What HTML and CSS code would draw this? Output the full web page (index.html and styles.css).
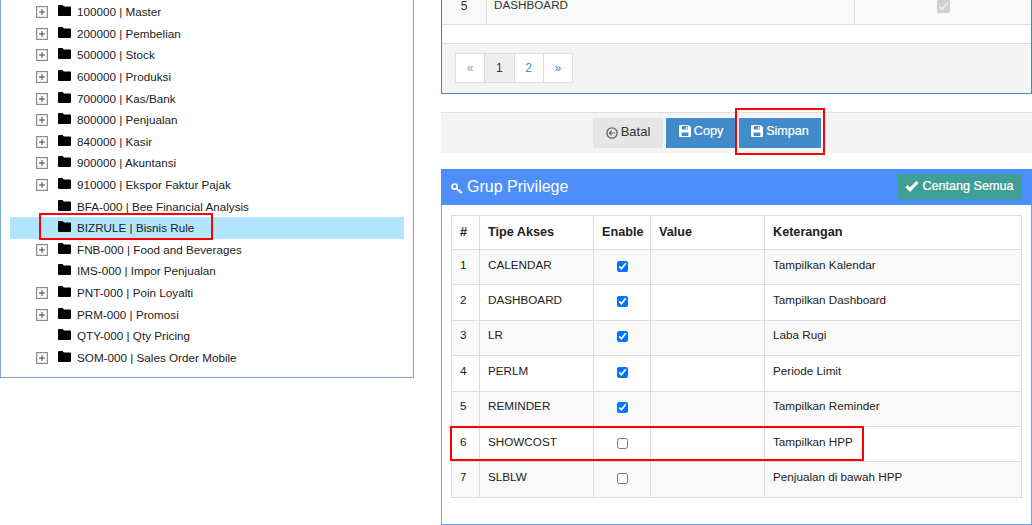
FILE: index.html
```html
<!DOCTYPE html>
<html lang="id">
<head>
<meta charset="utf-8">
<title>Grup Privilege</title>
<link rel="stylesheet" href="styles.css">
</head>
<body>
<svg class="defs" width="0" height="0" aria-hidden="true">
  <symbol id="plus" viewBox="0 0 12 12"><rect x=".5" y=".5" width="11" height="11" fill="#fff" stroke="#8c8c8c"/><rect x="1.500" y="1.500" width="9" height="9" fill="none" stroke="#e4e4e4"/><path d="M3 6h6M6 3v6" stroke="#444" stroke-width="1"/></symbol>
  <symbol id="folder" viewBox="0 0 13 11"><path d="M1 0h3.6l1.2 1.6H12a1 1 0 0 1 1 1V10a1 1 0 0 1-1 1H1a1 1 0 0 1-1-1V1a1 1 0 0 1 1-1z" fill="#000"/></symbol>
  <symbol id="save" viewBox="0 0 13 13"><path fill-rule="evenodd" d="M1 0h9.5L13 2.500V12a1 1 0 0 1-1 1H1a1 1 0 0 1-1-1V1a1 1 0 0 1 1-1zM3 1.200v3.600h6.600V1.200zM2.800 8v3.800h7.400V8zM7.400 1.800h1.400v2.400H7.400z" fill="currentColor"/></symbol>
</svg>
<div class="page">
  <aside class="tree-panel">
    <ul class="tree">
      <li><svg class="exp"><use href="#plus"/></svg><svg class="fld"><use href="#folder"/></svg><span>100000 | Master</span></li>
      <li><svg class="exp"><use href="#plus"/></svg><svg class="fld"><use href="#folder"/></svg><span>200000 | Pembelian</span></li>
      <li><svg class="exp"><use href="#plus"/></svg><svg class="fld"><use href="#folder"/></svg><span>500000 | Stock</span></li>
      <li><svg class="exp"><use href="#plus"/></svg><svg class="fld"><use href="#folder"/></svg><span>600000 | Produksi</span></li>
      <li><svg class="exp"><use href="#plus"/></svg><svg class="fld"><use href="#folder"/></svg><span>700000 | Kas/Bank</span></li>
      <li><svg class="exp"><use href="#plus"/></svg><svg class="fld"><use href="#folder"/></svg><span>800000 | Penjualan</span></li>
      <li><svg class="exp"><use href="#plus"/></svg><svg class="fld"><use href="#folder"/></svg><span>840000 | Kasir</span></li>
      <li><svg class="exp"><use href="#plus"/></svg><svg class="fld"><use href="#folder"/></svg><span>900000 | Akuntansi</span></li>
      <li><svg class="exp"><use href="#plus"/></svg><svg class="fld"><use href="#folder"/></svg><span>910000 | Ekspor Faktur Pajak</span></li>
      <li class="leaf"><svg class="fld"><use href="#folder"/></svg><span>BFA-000 | Bee Financial Analysis</span></li>
      <li class="leaf selected"><svg class="fld"><use href="#folder"/></svg><span>BIZRULE | Bisnis Rule</span></li>
      <li><svg class="exp"><use href="#plus"/></svg><svg class="fld"><use href="#folder"/></svg><span>FNB-000 | Food and Beverages</span></li>
      <li class="leaf"><svg class="fld"><use href="#folder"/></svg><span>IMS-000 | Impor Penjualan</span></li>
      <li><svg class="exp"><use href="#plus"/></svg><svg class="fld"><use href="#folder"/></svg><span>PNT-000 | Poin Loyalti</span></li>
      <li><svg class="exp"><use href="#plus"/></svg><svg class="fld"><use href="#folder"/></svg><span>PRM-000 | Promosi</span></li>
      <li class="leaf"><svg class="fld"><use href="#folder"/></svg><span>QTY-000 | Qty Pricing</span></li>
      <li><svg class="exp"><use href="#plus"/></svg><svg class="fld"><use href="#folder"/></svg><span>SOM-000 | Sales Order Mobile</span></li>
    </ul>
  </aside>

  <main class="main">
    <section class="top-panel">
      <div class="top-row">
        <div class="top-no">5</div>
        <div class="top-name">DASHBOARD</div>
        <div class="top-check"><input type="checkbox" checked disabled></div>
      </div>
      <div class="top-gap"></div>
      <div class="top-foot">
        <nav class="pager">
          <a class="muted">«</a><a class="current">1</a><a>2</a><a>»</a>
        </nav>
      </div>
    </section>

    <div class="actions">
      <button class="btn btn-grey">
        <svg class="ic ic-back" viewBox="0 0 13 13"><circle cx="6.500" cy="6.500" r="5.600" fill="none" stroke="currentColor" stroke-width="1.500"/><path d="M10 6.500H4M6.200 4 3.600 6.500 6.200 9" fill="none" stroke="currentColor" stroke-width="1.300"/></svg><span>Batal</span>
      </button>
      <button class="btn btn-blue"><svg class="ic"><use href="#save"/></svg><span>Copy</span></button>
      <button class="btn btn-blue btn-wide"><svg class="ic"><use href="#save"/></svg><span>Simpan</span></button>
    </div>

    <section class="priv-panel">
      <header class="priv-head">
        <h2><svg class="key" viewBox="0 0 12 12"><circle cx="3.600" cy="3.600" r="2.600" fill="none" stroke="currentColor" stroke-width="1.700"/><path d="M5.500 5.500 10 10M8 8 9.300 6.700M9.800 9.800 11 8.600" fill="none" stroke="currentColor" stroke-width="1.700"/></svg>Grup Privilege</h2>
        <button class="btn-check"><svg class="ok" viewBox="0 0 14 12"><path d="M1.500 6.200 5 9.700 12.500 2" fill="none" stroke="currentColor" stroke-width="3.200"/></svg><span>Centang Semua</span></button>
      </header>
      <div class="priv-body">
        <table class="priv-table">
          <colgroup><col class="c1"><col class="c2"><col class="c3"><col class="c4"><col class="c5"></colgroup>
          <thead>
            <tr><th>#</th><th>Tipe Akses</th><th>Enable</th><th>Value</th><th>Keterangan</th></tr>
          </thead>
          <tbody>
            <tr><td>1</td><td>CALENDAR</td><td class="chk"><input type="checkbox" checked></td><td></td><td>Tampilkan Kalendar</td></tr>
            <tr><td>2</td><td>DASHBOARD</td><td class="chk"><input type="checkbox" checked></td><td></td><td>Tampilkan Dashboard</td></tr>
            <tr><td>3</td><td>LR</td><td class="chk"><input type="checkbox" checked></td><td></td><td>Laba Rugi</td></tr>
            <tr><td>4</td><td>PERLM</td><td class="chk"><input type="checkbox" checked></td><td></td><td>Periode Limit</td></tr>
            <tr><td>5</td><td>REMINDER</td><td class="chk"><input type="checkbox" checked></td><td></td><td>Tampilkan Reminder</td></tr>
            <tr><td>6</td><td>SHOWCOST</td><td class="chk"><input type="checkbox"></td><td></td><td>Tampilkan HPP</td></tr>
            <tr><td>7</td><td>SLBLW</td><td class="chk"><input type="checkbox"></td><td></td><td>Penjualan di bawah HPP</td></tr>
          </tbody>
        </table>
      </div>
    </section>
  </main>

  <div class="mark mark-tree"></div>
  <div class="mark mark-save"></div>
  <div class="mark mark-row"></div>
</div>
</body>
</html>
```

FILE: styles.css
```css
html, body {
  margin: 0;
  padding: 0;
  background: #fff;
}

body {
  font-family: "Liberation Sans", Arial, sans-serif;
  font-size: 11.7px;
  color: #333;
}

.defs {
  position: absolute;
}

.page {
  position: relative;
  display: flex;
  gap: 27px;
  align-items: flex-start;
  width: 1032px;
  height: 525px;
  overflow: hidden;
}

/* tree */
.tree-panel {
  flex: 0 0 414px;
  box-sizing: border-box;
  height: 378px;
  padding-top: 1px;
  border: 1px solid #7ea6e0;
  border-top: 0;
}

.tree {
  list-style: none;
  margin: 0 9px;
  padding: 0;
}

.tree li {
  display: flex;
  align-items: center;
  height: 21.6px;
  padding-left: 26px;
  color: #222;
}

.tree li.leaf {
  padding-left: 48px;
}

.tree li.selected {
  background: #b3e5ff;
}

.exp {
  flex: none;
  width: 12px;
  height: 12px;
  margin-right: 10px;
  margin-top: 1px;
}

.fld {
  flex: none;
  width: 13px;
  height: 11px;
  margin-right: 6px;
  margin-top: -2px;
}

/* right column */
.main {
  flex: 1;
  min-width: 0;
  display: flex;
  flex-direction: column;
}

.top-panel {
  box-sizing: border-box;
  height: 94px;
  border: 1px solid #3c8dbc;
  border-top: 0;
  background: #fff;
}

.top-row {
  display: flex;
  box-sizing: border-box;
  height: 25px;
  background: #f9f9f9;
  border-bottom: 1px solid #ddd;
}

.top-no {
  width: 45px;
  box-sizing: border-box;
  border-right: 1px solid #ddd;
  text-align: center;
  line-height: 13px;
  font-size: 12px;
}

.top-name {
  width: 368px;
  box-sizing: border-box;
  padding-left: 7px;
  border-right: 1px solid #ddd;
  line-height: 10px;
}

.top-check {
  flex: 1;
  text-align: center;
}

.top-check input {
  width: 13px;
  height: 13px;
  margin: 0;
}

.top-gap {
  height: 18px;
}

.top-foot {
  box-sizing: border-box;
  height: 50px;
  padding: 9px 13px;
  background: #f4f4f4;
  border-top: 1px solid #ddd;
}

.pager {
  display: flex;
  width: 118px;
  height: 30px;
}

.pager a {
  flex: 1;
  display: flex;
  align-items: center;
  justify-content: center;
  margin-left: -1px;
  background: #fff;
  border: 1px solid #ddd;
  color: #428bca;
  font-size: 12px;
}

.pager a:first-child {
  margin-left: 0;
}

.pager a.muted {
  color: #999;
}

.pager a.current {
  background: #eee;
  color: #333;
}

/* actions */
.actions {
  box-sizing: border-box;
  display: flex;
  gap: 3px;
  height: 41px;
  margin-top: 18px;
  padding: 5px 0 0 152px;
  background: #f4f4f4;
  border-top: 1px solid #e0e0e0;
}

.btn {
  display: flex;
  align-items: center;
  justify-content: center;
  width: 70px;
  height: 30px;
  padding: 0 0 4px;
  border: 0;
  font-family: inherit;
  font-size: 12.6px;
}

.btn-grey {
  background: #e6e6e6;
  color: #333;
  font-size: 13px;
}

.btn-grey .ic-back {
  color: #666;
  margin-top: 4px;
}

.btn-blue {
  background: #428bca;
  color: #fff;
  -webkit-text-stroke: 0.2px #fff;
}

.btn-wide {
  width: 82px;
}

.ic {
  width: 12px;
  height: 12px;
  margin-right: 3px;
}

/* privilege panel */
.priv-panel {
  box-sizing: border-box;
  height: 356px;
  margin-top: 16px;
  border: 1px solid #6ea3f5;
  border-top: 0;
}

.priv-head {
  display: flex;
  align-items: flex-start;
  justify-content: space-between;
  box-sizing: border-box;
  height: 36px;
  margin: 0 -1px;
  padding: 5px 10px 0 10px;
  background: #4d8ffa;
  color: #fff;
}

.priv-head h2 {
  display: flex;
  align-items: center;
  height: 26px;
  margin: 0;
  font-size: 16px;
  font-weight: 400;
}

.key {
  width: 12px;
  height: 12px;
  margin: 3px 4px 0 0;
}

.btn-check {
  display: flex;
  align-items: center;
  justify-content: center;
  width: 125px;
  height: 26px;
  padding: 0 0 3px;
  border: 0;
  background: #3f9f97;
  color: #fff;
  font-family: inherit;
  font-size: 12.6px;
  -webkit-text-stroke: 0.2px #fff;
}

.ok {
  width: 14px;
  height: 12px;
  margin: 0 3px 0 0;
}

.priv-body {
  padding: 10px 9px 0;
}

.priv-table {
  width: 571px;
  height: 282px;
  border-collapse: collapse;
  table-layout: fixed;
}

.c1 { width: 28px; }
.c2 { width: 114px; }
.c3 { width: 57px; }
.c4 { width: 114px; }
.c5 { width: auto; }

.priv-table th,
.priv-table td {
  box-sizing: border-box;
  padding: 0 8px;
  border: 1px solid #ddd;
  text-align: left;
  vertical-align: middle;
}

.priv-table th {
  height: 34px;
  padding-bottom: 2px;
  font-size: 12.65px;
  color: #222;
}

.priv-table td {
  height: 35.4px;
  padding-bottom: 6px;
  color: #222;
}

.priv-table tbody tr:nth-child(odd) {
  background: #f9f9f9;
}

.priv-table td.chk {
  padding: 0 0 2px;
  text-align: center;
}

.chk input {
  display: block;
  width: 11px;
  height: 11px;
  margin: 0 auto;
}

/* red annotation boxes */
.mark {
  position: absolute;
  box-sizing: border-box;
  border: 2px solid #f00;
  pointer-events: none;
}

.mark-tree {
  left: 39px;
  top: 213px;
  width: 174px;
  height: 27px;
}

.mark-save {
  left: 735px;
  top: 108px;
  width: 90px;
  height: 47px;
}

.mark-row {
  left: 450px;
  top: 426px;
  width: 414px;
  height: 35px;
}
```
